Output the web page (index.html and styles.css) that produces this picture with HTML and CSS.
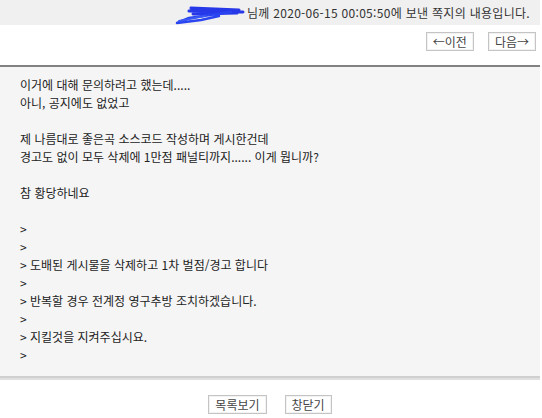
FILE: index.html
```html
<!DOCTYPE html>
<html lang="ko">
<head>
    <meta charset="UTF-8">
    <meta name="viewport" content="width=device-width, initial-scale=1.0">
    <title>쪽지 보기</title>

    <link rel="stylesheet" href="styles.css">
</head>

<body>
    <div class="memo">
        <!-- Sender line (name scribbled out) -->
        <div class="memo-head">
            <svg class="scribble" width="70" height="22" viewBox="0 0 70 22">
                <path d="M16 5 L64 7 M14 8 L68 9 M18 11 L62 10" stroke="#2638e8" stroke-width="3" fill="none" stroke-linecap="round"/>
                <path d="M56 9 L14 15 L2 20 L26 17 L44 13" stroke="#2a44f0" stroke-width="2.5" fill="none" stroke-linecap="round" stroke-linejoin="round"/>
                <path d="M4 18 L30 13" stroke="#3a58f4" stroke-width="2" fill="none" stroke-linecap="round"/>
            </svg>
            <span class="memo-title">님께 2020-06-15 00:05:50에 보낸 쪽지의 내용입니다.</span>
        </div>

        <!-- Prev / next -->
        <div class="memo-nav">
            <button class="btn" type="button">←이전</button>
            <button class="btn" type="button">다음→</button>
        </div>

        <!-- Message body -->
        <div class="memo-body">
            이거에 대해 문의하려고 했는데.....<br>
            아니, 공지에도 없었고<br>
            <br>
            제 나름대로 좋은곡 소스코드 작성하며 게시한건데<br>
            경고도 없이 모두 삭제에 1만점 패널티까지...... 이게 뭡니까?<br>
            <br>
            참 황당하네요<br>
            <br>
            &gt;<br>
            &gt;<br>
            &gt; 도배된 게시물을 삭제하고 1차 벌점/경고 합니다<br>
            &gt;<br>
            &gt; 반복할 경우 전계정 영구추방 조치하겠습니다.<br>
            &gt;<br>
            &gt; 지킬것을 지켜주십시요.<br>
            &gt;
        </div>

        <div class="memo-foot">
            <button class="btn" type="button">목록보기</button>
            <button class="btn" type="button">창닫기</button>
        </div>
    </div>
</body>
</html>
```

FILE: styles.css
```css
* {
    padding: 0;
    margin: 0;
    box-sizing: border-box;
}

body {
    background-color: #ffffff;
    color: #222222;
    font-family: "Noto Sans CJK KR", "Noto Sans", sans-serif;
    font-size: 12px;
}

.memo {
    width: 540px;
}

/* Sender line */
.memo-head {
    height: 25px;
    background-color: #f0f0f0;
    display: flex;
    justify-content: flex-end;
    align-items: center;
    padding-right: 10px;
    color: #333333;
}

.scribble {
    display: block;
    margin-right: 2px;
    margin-top: 3px;
}

.memo-title {
    line-height: 25px;
    letter-spacing: 0.3px;
}

/* Buttons */
.btn {
    font-family: "Noto Sans CJK KR", "Noto Sans", sans-serif;
    font-size: 12px;
    line-height: 17px;
    height: 19px;
    padding: 0 6px;
    color: #444444;
    background-color: #ffffff;
    border: 1px solid #c4c4c4;
    box-shadow: inset 0 0 0 1px #f2f2f2;
    cursor: pointer;
}

.memo-nav {
    height: 40px;
    display: flex;
    justify-content: flex-end;
    gap: 14px;
    padding: 7px 4px 0 0;
}

/* Message body */
.memo-body {
    background-color: #f5f5f5;
    border-top: 2px solid #828282;
    border-bottom: 2px solid #cfcfcf;
    box-shadow: 0 2px 0 #e0e0e0;
    padding: 9px 20px 12px;
    line-height: 18px;
}

.memo-foot {
    display: flex;
    justify-content: center;
    gap: 18px;
    padding-top: 17px;
}
```
